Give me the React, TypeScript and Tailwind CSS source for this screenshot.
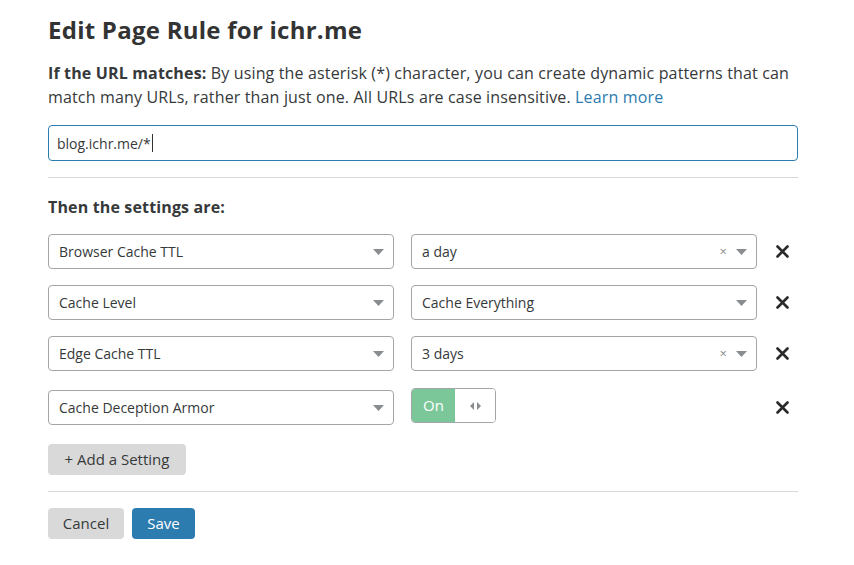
// Page rule editor: URL pattern + list of settings rows + save/cancel.

import type { ReactElement } from "react"

const font = { fontFamily: '"Open Sans", "Liberation Sans", sans-serif' }

interface SettingRow {
  name: string
  value?: string
  clearable?: boolean
  toggle?: boolean
}

const rows: SettingRow[] = [
  { name: "Browser Cache TTL", value: "a day", clearable: true },
  { name: "Cache Level", value: "Cache Everything" },
  { name: "Edge Cache TTL", value: "3 days", clearable: true },
  { name: "Cache Deception Armor", toggle: true },
]

function Caret(): ReactElement {
  return (
    <svg width="11" height="6" viewBox="0 0 11 6" className="shrink-0">
      <path d="M0 0h11L5.5 6z" fill="#8a8d90" />
    </svg>
  )
}

function Select({
  label,
  clearable,
}: {
  label: string
  clearable?: boolean
}): ReactElement {
  return (
    <div className="flex h-[35px] items-center rounded-[4px] border border-[#a3a6a8] bg-white pl-[10px] pr-[9px]">
      <span className="flex-1 truncate text-[14px] text-[#36393a]">{label}</span>
      {clearable && (
        <span className="mr-[9px] text-[13px] leading-none text-[#8a8d90]">×</span>
      )}
      <Caret />
    </div>
  )
}

function Toggle(): ReactElement {
  return (
    <div className="flex h-[35px] w-[85px] overflow-hidden rounded-[4px] border border-[#a3a6a8]">
      <div className="flex w-[43px] items-center justify-center bg-[#7cc799] text-[15px] text-white">
        On
      </div>
      <div className="flex flex-1 items-center justify-center bg-white">
        <svg width="11" height="8" viewBox="0 0 11 8">
          <path d="M4 0v8L0 4z M7 0v8l4-4z" fill="#8a8d90" />
        </svg>
      </div>
    </div>
  )
}

function RemoveX(): ReactElement {
  return (
    <svg width="13" height="13" viewBox="0 0 13 13">
      <path d="M1.5 1.5l10 10M11.5 1.5l-10 10" stroke="#2a2a2a" strokeWidth="2.6" strokeLinecap="round" />
    </svg>
  )
}

export default function App(): ReactElement {
  return (
    <div className="min-h-[565px] bg-white text-[#36393a]" style={font}>
      <div className="ml-[48px] w-[750px] pt-[13px]">
        <h1 className="text-[24px] font-bold leading-[34px] tracking-[0.25px] text-[#333]">
          Edit Page Rule for ichr.me
        </h1>

        <p className="mt-[14px] text-[16px] leading-[24px] tracking-[0.15px]">
          <strong className="font-bold">If the URL matches:</strong> By using the asterisk (*)
          character, you can create dynamic patterns that can match many URLs, rather than just
          one. All URLs are case insensitive.{" "}
          <a href="#" className="text-[#2c7cb0]">
            Learn more
          </a>
        </p>

        <div className="mt-[16px] flex h-[36px] items-center rounded-[4px] border border-[#2c7cb0] px-[8px] text-[14px]">
          <span>blog.ichr.me/*</span>
          <span className="ml-[1px] h-[18px] w-px bg-[#333]" />
        </div>

        <hr className="mt-[16px] border-0 border-t border-[#d9d9d9]" />

        <h2 className="mt-[17px] text-[16px] font-bold leading-[24px] tracking-[0.15px]">
          Then the settings are:
        </h2>

        <div className="mt-[15px] flex flex-col">
          {rows.map((r, i) => (
            <div
              key={r.name}
              className={`grid grid-cols-[346px_346px_1fr] items-center gap-x-[17px] ${
                i === 0 ? "" : i === 3 ? "mt-[19px]" : "mt-[16px]"
              }`}
            >
              <Select label={r.name} />
              {r.toggle ? (
                <div className="-mt-[4px]">
                  <Toggle />
                </div>
              ) : (
                <Select label={r.value ?? ""} clearable={r.clearable} />
              )}
              <div className="flex justify-end pr-[9px]">
                <RemoveX />
              </div>
            </div>
          ))}
        </div>

        <button
          type="button"
          className="mt-[19px] h-[31px] w-[138px] rounded-[4px] bg-[#d9d9d9] text-[15px] text-[#36393a]"
        >
          + Add a Setting
        </button>

        <hr className="mt-[16px] border-0 border-t border-[#d9d9d9]" />

        <div className="mt-[16px] flex gap-[8px]">
          <button
            type="button"
            className="h-[31px] w-[76px] rounded-[4px] bg-[#d9d9d9] text-[15px] text-[#36393a]"
          >
            Cancel
          </button>
          <button
            type="button"
            className="h-[31px] w-[63px] rounded-[4px] bg-[#2c7cb0] text-[15px] text-white"
          >
            Save
          </button>
        </div>
      </div>
    </div>
  )
}
